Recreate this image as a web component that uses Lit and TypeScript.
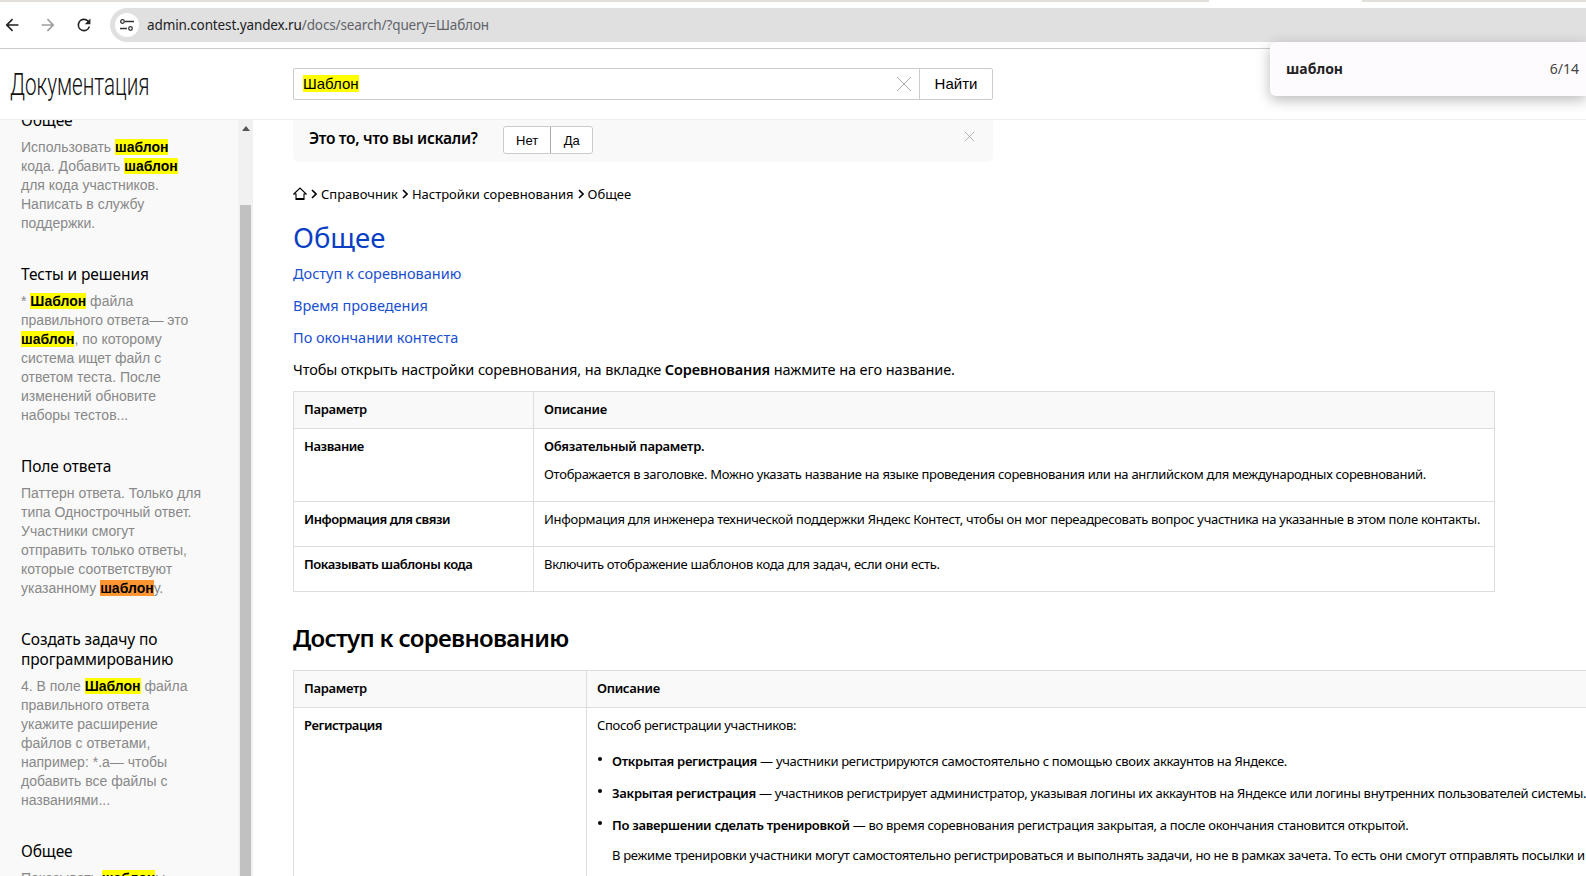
import { LitElement, html, css, svg } from "lit";
import { customElement } from "lit/decorators.js";

const hl = (t: string) => html`<b class="hit">${t}</b>`;

@customElement("app-root")
export class AppRoot extends LitElement {
  static styles = css`
    :host {
      display: block;
      height: 876px;
      overflow: hidden;
      position: relative;
      background: #fff;
      color: #000;
      font-family: "Noto Sans", sans-serif;
    }
    .tabs {
      height: 2px;
      background: linear-gradient(to right, #e2ded9 1209px, #fff 1209px, #fff 1362px, #e2ded9 1362px);
    }
    .toolbar {
      height: 46px;
      display: flex;
      align-items: center;
      gap: 16px;
      border-bottom: 1px solid #ccc;
      box-sizing: content-box;
    }
    .nav {
      display: flex;
      gap: 12px;
    }
    .nav svg {
      width: 24px;
      height: 24px;
      display: block;
    }
    .omni {
      flex: 1;
      height: 34px;
      border-radius: 17px 0 0 17px;
      background: #e0e0e0;
      display: flex;
      align-items: center;
      padding-left: 5px;
      gap: 8px;
      margin-left: -2px;
      font-size: 13.5px;
      letter-spacing: -0.12px;
      color: #5f6368;
    }
    .omni i {
      width: 24px;
      height: 24px;
      border-radius: 50%;
      background: #fff;
      display: flex;
      align-items: center;
      justify-content: center;
    }
    .omni span b {
      font-weight: 400;
      color: #202124;
    }
    header {
      height: 71px;
      box-sizing: border-box;
      display: flex;
      align-items: center;
      border-bottom: 1px solid #efefef;
    }
    .brand {
      width: 293px;
      padding-left: 10px;
      box-sizing: border-box;
      font: 300 31px Roboto, sans-serif;
      color: #111;
    }
    .brand span {
      display: inline-block;
      transform: scaleX(0.665);
      transform-origin: left;
      white-space: nowrap;
    }
    .search {
      display: flex;
      width: 700px;
      height: 32px;
      box-sizing: border-box;
      border: 1px solid #ccc;
      border-radius: 2px;
    }
    .search .field {
      flex: 1;
      display: flex;
      align-items: center;
      padding: 0 0 2px 9px;
      font: 15px "Liberation Sans", sans-serif;
    }
    .search .field mark {
      background: #ff0;
      color: #000;
    }
    .search .clear {
      width: 31px;
      display: flex;
      align-items: center;
      justify-content: center;
    }
    .search .go {
      width: 73px;
      padding-bottom: 2px;
      box-sizing: border-box;
      border-left: 1px solid #ccc;
      display: flex;
      align-items: center;
      justify-content: center;
      font: 15px "Liberation Sans", sans-serif;
    }
    .body {
      display: flex;
      height: 756px;
      overflow: hidden;
    }
    aside {
      width: 238px;
      background: #f9f9f9;
      overflow: hidden;
      flex: none;
      padding: 0 35.5px 0 21px;
      box-sizing: border-box;
    }
    .results {
      margin-top: -10px;
    }
    .result {
      margin-bottom: 31px;
    }
    .result h4 {
      margin: 0 0 8px;
      font-size: 15.5px;
      letter-spacing: -0.1px;
      font-weight: 400;
      line-height: 20px;
      color: #000;
    }
    .result p {
      margin: 0;
      font: 14px/19px "Liberation Sans", sans-serif;
      color: #888;
    }
    .hit {
      background: #ff0;
      color: #000;
      font-weight: 700;
    }
    .hit.cur {
      background: #ff9632;
    }
    .bar {
      width: 15px;
      flex: none;
      background: #f1f1f1;
      display: flex;
      flex-direction: column;
    }
    .bar .up {
      height: 85px;
      display: flex;
      justify-content: center;
      padding-top: 6px;
      box-sizing: border-box;
    }
    .bar .up::before {
      content: "";
      border: 4px solid transparent;
      border-top: 0;
      border-bottom: 5px solid #555;
      height: 0;
    }
    .bar .thumb {
      flex: 1;
      background: #c1c1c1;
      margin: 0 2px;
    }
    main {
      flex: 1;
      min-width: 0;
      padding-left: 40px;
      box-sizing: border-box;
      overflow: hidden;
      font-size: 14px;
      color: #000;
    }
    .ask {
      width: 700px;
      height: 42px;
      box-sizing: border-box;
      background: #f9f9f9;
      border-radius: 0 0 5px 5px;
      display: flex;
      align-items: center;
      padding: 0 16px;
      position: relative;
    }
    .ask strong {
      width: 194px;
      flex: none;
      margin-bottom: 6px;
      font-size: 15.5px;
      letter-spacing: -0.3px;
      font-weight: 600;
    }
    .ask .btns {
      display: flex;
      height: 28px;
      box-sizing: border-box;
      margin-bottom: 2px;
      border: 1px solid #ccc;
      border-radius: 3px;
      background: #fff;
      font: 13px "Liberation Sans", sans-serif;
    }
    .ask .btns span {
      display: flex;
      align-items: center;
      padding: 0 12px;
    }
    .ask .btns span + span {
      border-left: 1px solid #aaa;
      padding: 0 12.5px;
    }
    .ask .close {
      position: absolute;
      right: 18px;
      top: 11px;
    }
    .ask .close svg {
      display: block;
    }
    .crumbs {
      display: flex;
      align-items: center;
      gap: 4px;
      margin-top: 22px;
      height: 20px;
      font-size: 13px;
    }
    h1 {
      margin: 15px 0 0;
      font-size: 27.5px;
      line-height: 38px;
      font-weight: 400;
      color: #0a3fc4;
    }
    .toc a {
      display: block;
      font-size: 14.5px;
      line-height: 20px;
      margin-top: 12px;
      color: #1a4fd0;
    }
    .toc a:first-child {
      margin-top: 6px;
    }
    .lead {
      margin: 12px 0 0;
      font-size: 14.5px;
      letter-spacing: -0.1px;
      line-height: 20px;
    }
    .lead b {
      font-weight: 600;
    }
    table {
      border-collapse: collapse;
      table-layout: fixed;
      font-size: 13px;
      letter-spacing: -0.3px;
      line-height: 18px;
    }
    th,
    td {
      border: 1px solid #ddd;
      padding: 8px 10px 18px;
      text-align: left;
      vertical-align: top;
      font-weight: 400;
    }
    th {
      background: #f9f9f9;
      font-weight: 600;
      padding: 8px 10px 10px;
    }
    td.k,
    td b {
      font-weight: 600;
    }
    td.k {
      letter-spacing: -0.45px;
    }
    td p {
      margin: 0 0 10px;
    }
    td p:last-child {
      margin-bottom: 0;
    }
    .t1 {
      margin-top: 12px;
      width: 1202px;
    }
    h2 {
      margin: 29px 0 0;
      font-size: 24px;
      letter-spacing: -0.7px;
      line-height: 34px;
      font-weight: 600;
    }
    .t2 {
      margin-top: 15px;
      width: 1400px;
    }
    .t2 ul {
      margin: 18px 0 0;
      padding: 0 0 0 15px;
      list-style: none;
    }
    .t2 li {
      position: relative;
      margin-top: 14px;
      white-space: nowrap;
    }
    .t2 li:first-child {
      margin-top: 0;
    }
    .t2 li::before {
      content: "";
      position: absolute;
      left: -14px;
      top: 5px;
      width: 4px;
      height: 4px;
      border-radius: 50%;
      background: #000;
    }
    .t2 .note {
      margin: 12px 0 0 15px;
      white-space: nowrap;
    }
    .find {
      position: absolute;
      top: 42px;
      right: 0;
      width: 316px;
      height: 54px;
      box-sizing: border-box;
      padding: 0 7px 2px 16px;
      background: #fefbff;
      border-radius: 6px 0 0 6px;
      box-shadow: 0 4px 14px rgba(0, 0, 0, 0.28);
      display: flex;
      align-items: center;
      justify-content: space-between;
      font-size: 14px;
    }
    .find b {
      font-weight: 700;
      color: #222;
    }
    .find span {
      color: #444;
    }
  `;

  private cross(size: number, color: string) {
    return html`<svg width=${size} height=${size} viewBox="0 0 16 16" fill="none" stroke=${color} stroke-width="1">
      ${svg`<path d="M1 1l14 14M15 1L1 15" />`}
    </svg>`;
  }

  private chev() {
    return html`<svg width="6" height="10" viewBox="0 0 6 10" fill="none" stroke="#000" stroke-width="1.6">
      ${svg`<path d="M1 1l4 4-4 4" />`}
    </svg>`;
  }

  render() {
    return html`
      <div class="tabs"></div>
      <div class="toolbar">
        <div class="nav">
          <svg viewBox="0 0 24 24" fill="#202124"><path d="M20 11H7.8l5.6-5.6L12 4l-8 8 8 8 1.4-1.4L7.8 13H20z" transform="translate(2.4 2.4) scale(.8)" /></svg>
          <svg viewBox="0 0 24 24" fill="#9e9e9e"><path d="M4 11h12.2l-5.6-5.6L12 4l8 8-8 8-1.4-1.4 5.6-5.6H4z" transform="translate(2.4 2.4) scale(.8)" /></svg>
          <svg viewBox="0 0 24 24" fill="#202124"><path d="M17.65 6.35A8 8 0 1 0 19.73 14h-2.08A6 6 0 1 1 12 6c1.66 0 3.14.69 4.22 1.78L13 11h7V4z" transform="translate(2.4 2.4) scale(.8)" /></svg>
        </div>
        <div class="omni">
          <i>
            <svg width="14" height="12" viewBox="0 0 14 12" fill="none" stroke="#333" stroke-width="1.3">
              <path d="M5 2.5h9M0 9.5h7" />
              <circle cx="2.5" cy="2.5" r="1.8" />
              <circle cx="10.5" cy="9.5" r="1.8" />
            </svg>
          </i>
          <span><b>admin.contest.yandex.ru</b>/docs/search/?query=Шаблон</span>
        </div>
      </div>
      <header>
        <div class="brand"><span>Документация</span></div>
        <div class="search">
          <div class="field"><mark>Шаблон</mark></div>
          <div class="clear">${this.cross(16, "#aaa")}</div>
          <div class="go">Найти</div>
        </div>
      </header>
      <div class="body">
        <aside>
          <div class="results">
            <div class="result">
              <h4>Общее</h4>
              <p>Использовать ${hl("шаблон")} кода. Добавить ${hl("шаблон")} для кода участников. Написать в службу поддержки.</p>
            </div>
            <div class="result">
              <h4>Тесты и решения</h4>
              <p>* ${hl("Шаблон")} файла правильного ответа— это ${hl("шаблон")}, по которому система ищет файл с ответом теста. После изменений обновите наборы тестов...</p>
            </div>
            <div class="result">
              <h4>Поле ответа</h4>
              <p>Паттерн ответа. Только для типа Однострочный ответ. Участники смогут отправить только ответы, которые соответствуют указанному <b class="hit cur">шаблон</b>у.</p>
            </div>
            <div class="result">
              <h4>Создать задачу по программированию</h4>
              <p>4. В поле ${hl("Шаблон")} файла правильного ответа укажите расширение файлов с ответами, например: *.a— чтобы добавить все файлы с названиями...</p>
            </div>
            <div class="result">
              <h4>Общее</h4>
              <p>Показывать ${hl("шаблон")}ы</p>
            </div>
          </div>
        </aside>
        <div class="bar"><div class="up"></div><div class="thumb"></div></div>
        <main>
          <div class="ask">
            <strong>Это то, что вы искали?</strong>
            <div class="btns"><span>Нет</span><span>Да</span></div>
            <div class="close">${this.cross(11, "#999")}</div>
          </div>
          <div class="crumbs">
            <svg width="14" height="14" viewBox="0 0 14 14" fill="none" stroke="#000" stroke-width="1.1">
              <path d="M.8 7L7 1l6.2 6H11v5.5H3V7zM3 11.5h8" />
            </svg>
            ${this.chev()}<span>Справочник</span>${this.chev()}<span>Настройки соревнования</span>${this.chev()}<span>Общее</span>
          </div>
          <h1>Общее</h1>
          <div class="toc">
            <a>Доступ к соревнованию</a>
            <a>Время проведения</a>
            <a>По окончании контеста</a>
          </div>
          <p class="lead">Чтобы открыть настройки соревнования, на вкладке <b>Соревнования</b> нажмите на его название.</p>
          <table class="t1">
            <colgroup><col style="width:240px" /><col /></colgroup>
            <tr><th>Параметр</th><th>Описание</th></tr>
            <tr>
              <td class="k">Название</td>
              <td>
                <p><b>Обязательный параметр.</b></p>
                <p>Отображается в заголовке. Можно указать название на языке проведения соревнования или на английском для международных соревнований.</p>
              </td>
            </tr>
            <tr>
              <td class="k">Информация для связи</td>
              <td>Информация для инженера технической поддержки Яндекс Контест, чтобы он мог переадресовать вопрос участника на указанные в этом поле контакты.</td>
            </tr>
            <tr>
              <td class="k">Показывать шаблоны кода</td>
              <td>Включить отображение шаблонов кода для задач, если они есть.</td>
            </tr>
          </table>
          <h2>Доступ к соревнованию</h2>
          <table class="t2">
            <colgroup><col style="width:293px" /><col /></colgroup>
            <tr><th>Параметр</th><th>Описание</th></tr>
            <tr>
              <td class="k">Регистрация</td>
              <td>
                Способ регистрации участников:
                <ul>
                  <li><b>Открытая регистрация</b> — участники регистрируются самостоятельно с помощью своих аккаунтов на Яндексе.</li>
                  <li><b>Закрытая регистрация</b> — участников регистрирует администратор, указывая логины их аккаунтов на Яндексе или логины внутренних пользователей системы.</li>
                  <li><b>По завершении сделать тренировкой</b> — во время соревнования регистрация закрытая, а после окончания становится открытой.</li>
                </ul>
                <div class="note">В режиме тренировки участники могут самостоятельно регистрироваться и выполнять задачи, но не в рамках зачета. То есть они смогут отправлять посылки и</div>
                <div class="note">результаты не попадут в итоговую таблицу.</div>
              </td>
            </tr>
          </table>
        </main>
      </div>
      <div class="find"><b>шаблон</b><span>6/14</span></div>
    `;
  }
}
